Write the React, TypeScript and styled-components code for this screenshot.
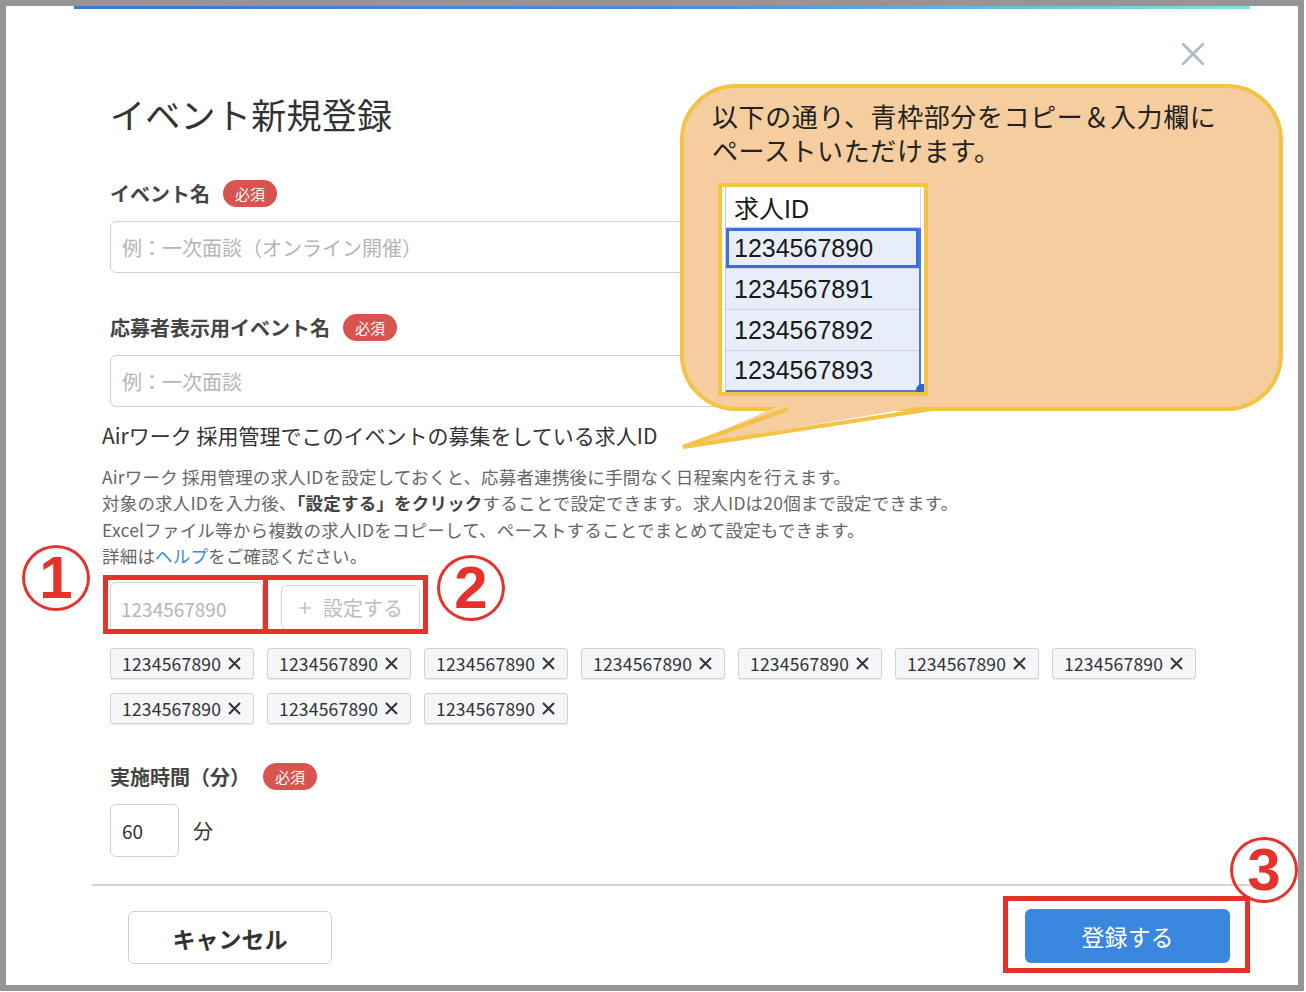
import styled, { createGlobalStyle } from 'styled-components';
import { Plus } from 'lucide-react';

const red = '#e5322a';
const yellow = '#f4c244';
const peach = '#f5cd9e';

const GlobalStyle = createGlobalStyle`
  body {
    margin: 0;
    background: #fff;
    font-family: 'Noto Sans CJK JP', 'Noto Sans', sans-serif;
    color: #333;
  }
`;

const Frame = styled.div`
  position: relative;
  width: 1304px;
  height: 991px;
  border: 6px solid #959595;
  box-sizing: border-box;
  overflow: hidden;
`;

const Modal = styled.div`
  margin-left: 68px;
  width: 1176px;
`;

const TopLine = styled.div`
  height: 3px;
  background: linear-gradient(90deg, #3b78d4 0%, #4a90dc 55%, #7fe2e6 100%);
`;

const Header = styled.div`
  display: flex;
  justify-content: flex-end;
  padding: 34px 46px 0 0;
`;

const Content = styled.div`
  padding: 0 36px;
`;

const Title = styled.h1`
  margin: 29px 0 45px;
  font-size: 35px;
  line-height: 40px;
  font-weight: 400;
  color: #333;
  letter-spacing: 0.3px;
`;

const Field = styled.div<{ $gap?: number }>`
  margin-bottom: ${(p) => p.$gap ?? 0}px;
`;

const LabelRow = styled.div`
  display: flex;
  align-items: center;
  gap: 13px;
  height: 28px;
  margin-bottom: 14px;
`;

const Label = styled.span`
  font-size: 20px;
  font-weight: 700;
  color: #444;
`;

const Badge = styled.span`
  display: inline-flex;
  align-items: center;
  height: 27px;
  padding: 0 12px;
  border-radius: 14px;
  background: #d9534f;
  color: #fff;
  font-size: 15px;
`;

const TextInput = styled.input`
  display: block;
  width: 100%;
  height: 52px;
  box-sizing: border-box;
  border: 1.5px solid #cfcfcf;
  border-radius: 6px;
  padding: 0 11px;
  font-family: inherit;
  font-size: 20px;
  color: #333;
  &::placeholder {
    color: #b5b5b5;
  }
`;

const SectionTitle = styled.h2`
  margin: 0 0 15px -8px;
  font-size: 21px;
  line-height: 28px;
  font-weight: 400;
  color: #333;
`;

const Description = styled.p`
  margin: 0 0 0 -8px;
  font-size: 17.5px;
  line-height: 26.3px;
  letter-spacing: 0.2px;
  color: #666;
  b {
    color: #444;
  }
`;

const HelpLink = styled.a`
  color: #3a8be0;
  text-decoration: none;
`;

const IdRow = styled.div`
  display: flex;
  margin: 6px 0 0 -7px;
`;

const MarkBox = styled.div<{ $pad: string }>`
  width: 165px;
  height: 59px;
  box-sizing: border-box;
  border: 5px solid ${red};
  padding: ${(p) => p.$pad};
  overflow: hidden;
  & + & {
    margin-left: -5px;
  }
`;

const IdInput = styled(TextInput)`
  width: 153px;
  padding-left: 10px;
  font-size: 19px;
`;

const SetButton = styled.button`
  display: flex;
  align-items: center;
  gap: 9px;
  width: 139px;
  height: 45px;
  padding: 0 14px;
  box-sizing: border-box;
  border: 1.5px solid #d3d3d3;
  border-radius: 6px;
  background: #fff;
  color: #bdbdbd;
  font-family: inherit;
  font-size: 20px;
`;

const ChipList = styled.div`
  display: flex;
  flex-wrap: wrap;
  gap: 14px 13px;
  margin-top: 14px;
`;

const Chip = styled.span`
  display: inline-flex;
  align-items: center;
  gap: 7px;
  width: 144px;
  height: 31px;
  box-sizing: border-box;
  padding-left: 11px;
  border: 1px solid #d2d2d2;
  border-radius: 3px;
  background: #f4f6f9;
  box-shadow: 0 1px 1px rgba(0, 0, 0, 0.08);
  font-size: 17.5px;
  letter-spacing: 0.2px;
  color: #333;
`;

const DurationRow = styled.div`
  display: flex;
  align-items: center;
  gap: 14px;
  font-size: 20px;
`;

const SmallInput = styled(TextInput)`
  width: 69px;
  height: 53px;
  font-size: 19px;
`;

const Divider = styled.hr`
  margin: 27px 0 0 18px;
  border: none;
  height: 2px;
  background: #d4d4d4;
`;

const Footer = styled.div`
  display: flex;
  justify-content: space-between;
  align-items: flex-start;
  padding-left: 54px;
`;

const CancelButton = styled.button`
  margin-top: 25px;
  width: 204px;
  height: 53px;
  border: 1.5px solid #cfcfcf;
  border-radius: 6px;
  background: #fff;
  color: #333;
  font-family: inherit;
  font-size: 23px;
  font-weight: 700;
`;

const RegisterMark = styled.div`
  margin-top: 10px;
  border: 5px solid ${red};
  padding: 8px 15px 5px 17px;
`;

const RegisterButton = styled.button`
  display: block;
  width: 205px;
  height: 54px;
  border: none;
  border-radius: 6px;
  background: #3b86de;
  color: #fff;
  font-family: inherit;
  font-size: 23px;
`;

const CircleMark = styled.span<{ $x: number; $y: number }>`
  position: absolute;
  left: ${(p) => p.$x}px;
  top: ${(p) => p.$y}px;
  width: 68px;
  height: 66px;
  box-sizing: border-box;
  border: 3px solid ${red};
  border-radius: 50%;
  display: flex;
  align-items: center;
  justify-content: center;
  color: ${red};
  font-family: 'Liberation Sans', Arial, sans-serif;
  font-size: 60px;
  font-weight: 700;
  line-height: 1;
`;

/* speech bubble with the spreadsheet sample */
const Bubble = styled.div`
  position: absolute;
  left: 674px;
  top: 78px;
  width: 603px;
  height: 327px;
  box-sizing: border-box;
  padding: 11px 20px 0 28px;
  border: 4px solid ${yellow};
  border-radius: 56px;
  background: ${peach};
`;

const BubbleText = styled.p`
  margin: 0;
  font-size: 26px;
  line-height: 34px;
  letter-spacing: 0.6px;
  color: #222;
`;

const Sheet = styled.div`
  position: relative;
  width: 210px;
  margin: 16px 0 0 6px;
  box-sizing: border-box;
  border: 4px solid ${yellow};
  background: #fff;
`;

const SheetBody = styled.div`
  margin: 0 3px;
  border-left: 1px solid #c9c9c9;
  font-family: 'Liberation Sans', Arial, 'Noto Sans CJK JP', sans-serif;
  font-size: 25px;
  color: #1a1a1a;
`;

const HeaderCell = styled.div`
  display: flex;
  align-items: center;
  height: 40px;
  padding-left: 8px;
  border-right: 1px solid #dedede;
  border-bottom: 1px solid #cfcfcf;
`;

const Selection = styled.div`
  background: #e8eef9;
  border-right: 2px solid #4a7be0;
  border-bottom: 2px solid #4a7be0;
`;

const Cell = styled.div<{ $active?: boolean }>`
  display: flex;
  align-items: center;
  height: 40px;
  padding-left: 8px;
  border-bottom: 1px solid #cfd3da;
  box-shadow: ${(p) => (p.$active ? 'inset 0 0 0 3px #3d6fdc' : 'none')};
  &:last-child {
    border-bottom: none;
    height: 39px;
  }
`;

const FillHandle = styled.span`
  position: absolute;
  right: 0;
  bottom: 0;
  width: 8px;
  height: 8px;
  border-top-left-radius: 6px;
  background: #2f62d6;
`;

const Tail = styled.svg`
  position: absolute;
  left: 674px;
  top: 394px;
`;

const CloseIcon = () => (
  <svg width="22" height="22" viewBox="0 0 22 22">
    <path d="M1 1 21 21M21 1 1 21" stroke="#a8bacc" strokeWidth="2.6" strokeLinecap="round" />
  </svg>
);

const ChipClose = () => (
  <svg width="13" height="13" viewBox="0 0 13 13">
    <path d="M1 1 12 12M12 1 1 12" stroke="#333" strokeWidth="2" />
  </svg>
);

const chips = Array.from({ length: 10 }, () => '1234567890');

const App = () => (
  <>
    <GlobalStyle />
    <Frame>
      <Modal>
        <TopLine />
        <Header>
          <CloseIcon />
        </Header>
        <Content>
          <Title>イベント新規登録</Title>

          <Field $gap={40}>
            <LabelRow>
              <Label>イベント名</Label>
              <Badge>必須</Badge>
            </LabelRow>
            <TextInput placeholder="例：一次面談（オンライン開催）" />
          </Field>

          <Field $gap={14}>
            <LabelRow>
              <Label>応募者表示用イベント名</Label>
              <Badge>必須</Badge>
            </LabelRow>
            <TextInput placeholder="例：一次面談" />
          </Field>

          <SectionTitle>Airワーク 採用管理でこのイベントの募集をしている求人ID</SectionTitle>
          <Description>
            Airワーク 採用管理の求人IDを設定しておくと、応募者連携後に手間なく日程案内を行えます。
            <br />
            対象の求人IDを入力後、<b>「設定する」をクリック</b>することで設定できます。求人IDは20個まで設定できます。
            <br />
            Excelファイル等から複数の求人IDをコピーして、ペーストすることでまとめて設定もできます。
            <br />
            詳細は<HelpLink href="#">ヘルプ</HelpLink>をご確認ください。
          </Description>

          <IdRow>
            <MarkBox $pad="2px 0 0 2px">
              <IdInput placeholder="1234567890" />
            </MarkBox>
            <MarkBox $pad="5px 0 0 13px">
              <SetButton>
                <Plus size={18} strokeWidth={2} />
                設定する
              </SetButton>
            </MarkBox>
          </IdRow>

          <ChipList>
            {chips.map((id, i) => (
              <Chip key={i}>
                {id}
                <ChipClose />
              </Chip>
            ))}
          </ChipList>

          <Field style={{ marginTop: 38 }}>
            <LabelRow>
              <Label>実施時間（分）</Label>
              <Badge>必須</Badge>
            </LabelRow>
            <DurationRow>
              <SmallInput defaultValue="60" />
              分
            </DurationRow>
          </Field>
        </Content>

        <Divider />

        <Footer>
          <CancelButton>キャンセル</CancelButton>
          <RegisterMark>
            <RegisterButton>登録する</RegisterButton>
          </RegisterMark>
        </Footer>
      </Modal>

      <Bubble>
        <BubbleText>
          以下の通り、青枠部分をコピー＆入力欄に
          <br />
          ペーストいただけます。
        </BubbleText>
        <Sheet>
          <SheetBody>
            <HeaderCell>求人ID</HeaderCell>
            <Selection>
              <Cell $active>1234567890</Cell>
              <Cell>1234567891</Cell>
              <Cell>1234567892</Cell>
              <Cell>1234567893</Cell>
            </Selection>
          </SheetBody>
          <FillHandle />
        </Sheet>
      </Bubble>
      <Tail width="260" height="54" viewBox="0 0 260 54">
        <polygon points="104,4 3,47 256,4" fill={peach} />
        <polyline points="108,9 3,47 252,9" fill="none" stroke={yellow} strokeWidth="4" />
      </Tail>

      <CircleMark $x={16} $y={539}>1</CircleMark>
      <CircleMark $x={431} $y={549}>2</CircleMark>
      <CircleMark $x={1224} $y={831}>3</CircleMark>
    </Frame>
  </>
);

export default App;
